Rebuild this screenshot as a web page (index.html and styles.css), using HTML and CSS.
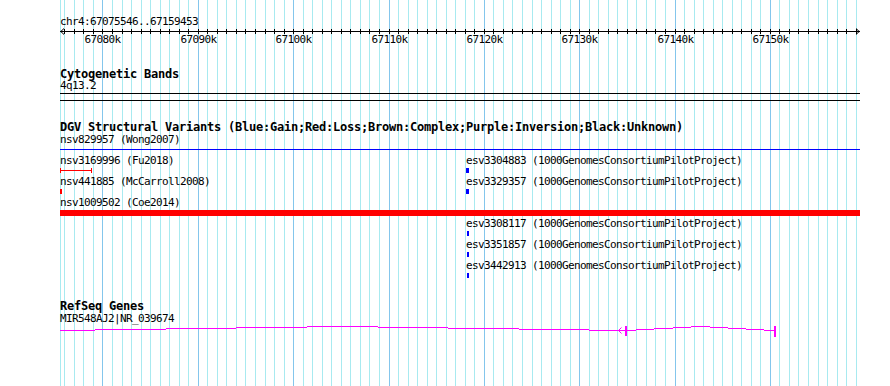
FILE: index.html
```html
<!DOCTYPE html>
<html>
<head>
<meta charset="utf-8">
<link rel="stylesheet" href="styles.css">
</head>
<body>
<div class="panel">
  <svg class="grid" width="890" height="386" viewBox="0 0 890 386">
    <path class="minor" d="M60.5 0V386M64.5 0V386M74.5 0V386M83.5 0V386M93.5 0V386M112.5 0V386M122.5 0V386M131.5 0V386M141.5 0V386M150.5 0V386M160.5 0V386M169.5 0V386M179.5 0V386M188.5 0V386M207.5 0V386M217.5 0V386M226.5 0V386M236.5 0V386M245.5 0V386M255.5 0V386M265.5 0V386M274.5 0V386M284.5 0V386M303.5 0V386M312.5 0V386M322.5 0V386M331.5 0V386M341.5 0V386M350.5 0V386M360.5 0V386M369.5 0V386M379.5 0V386M398.5 0V386M408.5 0V386M417.5 0V386M427.5 0V386M436.5 0V386M446.5 0V386M455.5 0V386M465.5 0V386M474.5 0V386M493.5 0V386M503.5 0V386M512.5 0V386M522.5 0V386M532.5 0V386M541.5 0V386M551.5 0V386M560.5 0V386M570.5 0V386M589.5 0V386M598.5 0V386M608.5 0V386M617.5 0V386M627.5 0V386M636.5 0V386M646.5 0V386M655.5 0V386M665.5 0V386M684.5 0V386M694.5 0V386M703.5 0V386M713.5 0V386M722.5 0V386M732.5 0V386M741.5 0V386M751.5 0V386M760.5 0V386M779.5 0V386M789.5 0V386M798.5 0V386M808.5 0V386M818.5 0V386M827.5 0V386M837.5 0V386M846.5 0V386M856.5 0V386"/>
    <path class="major" d="M102.5 0V386M198.5 0V386M293.5 0V386M389.5 0V386M484.5 0V386M579.5 0V386M675.5 0V386M770.5 0V386"/>
  </svg>

  <div class="tracks">
    <div class="lbl chrom">chr4:67075546..67159453</div>
    <svg class="ruler" width="802" height="19" viewBox="0 0 802 19">
      <path class="axis" d="M0 3.5H800"/>
      <path class="axis" d="M4 0.5L0.8 3.5L4 6.5M796 0.5L799.2 3.5L796 6.5"/>
      <path class="ticks" d="M4.5 1V6M14.5 1V6M23.5 1V6M33.5 1V6M42.5 1V6M52.5 1V6M62.5 1V6M71.5 1V6M81.5 1V6M90.5 1V6M100.5 1V6M109.5 1V6M119.5 1V6M128.5 1V6M138.5 1V6M147.5 1V6M157.5 1V6M166.5 1V6M176.5 1V6M185.5 1V6M195.5 1V6M205.5 1V6M214.5 1V6M224.5 1V6M233.5 1V6M243.5 1V6M252.5 1V6M262.5 1V6M271.5 1V6M281.5 1V6M290.5 1V6M300.5 1V6M309.5 1V6M319.5 1V6M329.5 1V6M338.5 1V6M348.5 1V6M357.5 1V6M367.5 1V6M376.5 1V6M386.5 1V6M395.5 1V6M405.5 1V6M414.5 1V6M424.5 1V6M433.5 1V6M443.5 1V6M452.5 1V6M462.5 1V6M472.5 1V6M481.5 1V6M491.5 1V6M500.5 1V6M510.5 1V6M519.5 1V6M529.5 1V6M538.5 1V6M548.5 1V6M557.5 1V6M567.5 1V6M576.5 1V6M586.5 1V6M595.5 1V6M605.5 1V6M615.5 1V6M624.5 1V6M634.5 1V6M643.5 1V6M653.5 1V6M662.5 1V6M672.5 1V6M681.5 1V6M691.5 1V6M700.5 1V6M710.5 1V6M719.5 1V6M729.5 1V6M738.5 1V6M748.5 1V6M758.5 1V6M767.5 1V6M777.5 1V6M786.5 1V6M796.5 1V6"/>
      <text class="tick-label" x="42.5" y="15">67080k</text>
      <text class="tick-label" x="138.5" y="15">67090k</text>
      <text class="tick-label" x="233.5" y="15">67100k</text>
      <text class="tick-label" x="329.5" y="15">67110k</text>
      <text class="tick-label" x="424.5" y="15">67120k</text>
      <text class="tick-label" x="519.5" y="15">67130k</text>
      <text class="tick-label" x="615.5" y="15">67140k</text>
      <text class="tick-label" x="710.5" y="15">67150k</text>
    </svg>

    <div class="track cyto">
      <div class="title">Cytogenetic Bands</div>
      <div class="lbl">4q13.2</div>
      <div class="band"></div>
    </div>

    <div class="track dgv">
      <div class="title">DGV Structural Variants (Blue:Gain;Red:Loss;Brown:Complex;Purple:Inversion;Black:Unknown)</div>
      <div class="lbl sub">nsv829957 (Wong2007)</div>
      <div class="span-line"></div>
      <div class="rows">
        <div class="row">
          <span class="flabel" style="left:0px">nsv3169996 (Fu2018)</span>
          <span class="feat loss-range" style="left:0px;width:32px"></span>
          <span class="flabel" style="left:406px">esv3304883 (1000GenomesConsortiumPilotProject)</span>
          <span class="feat gain" style="left:406px;width:3px"></span>
        </div>
        <div class="row">
          <span class="flabel" style="left:0px">nsv441885 (McCarroll2008)</span>
          <span class="feat loss" style="left:0px;width:2px"></span>
          <span class="flabel" style="left:406px">esv3329357 (1000GenomesConsortiumPilotProject)</span>
          <span class="feat gain" style="left:406px;width:3px"></span>
        </div>
        <div class="row">
          <span class="flabel" style="left:0px">nsv1009502 (Coe2014)</span>
          <span class="feat loss thick" style="left:0px;width:800px"></span>
        </div>
        <div class="row">
          <span class="flabel" style="left:406px">esv3308117 (1000GenomesConsortiumPilotProject)</span>
          <span class="feat gain" style="left:407px;width:2px"></span>
        </div>
        <div class="row">
          <span class="flabel" style="left:406px">esv3351857 (1000GenomesConsortiumPilotProject)</span>
          <span class="feat gain" style="left:407px;width:2px"></span>
        </div>
        <div class="row">
          <span class="flabel" style="left:406px">esv3442913 (1000GenomesConsortiumPilotProject)</span>
          <span class="feat gain" style="left:407px;width:2px"></span>
        </div>
      </div>
    </div>

    <div class="track refseq">
      <div class="title">RefSeq Genes</div>
      <div class="lbl sub">MIR548AJ2|NR_039674</div>
      <svg class="gene" width="800" height="12" viewBox="0 0 800 12">
        <path class="intron" d="M0 5.5H35M35 4.5H106M106 3.5H176M176 2.5H247M247 1.5H318M318 2.5H388M388 3.5H459M459 4.5H529M529 5.5H565"/>
        <path class="strand" d="M561.5 2.5L558.5 5.5L561.5 8.5"/>
        <rect class="exon" x="565" y="1" width="2" height="10"/>
        <path class="intron" d="M566 5.5H576M576 4.5H594M594 3.5H613M613 2.5H631M631 1.5H650M650 2.5H668M668 3.5H686M686 4.5H704M704 5.5H714"/>
        <rect class="exon" x="714" y="1" width="2" height="11"/>
      </svg>
    </div>
  </div>
</div>
</body>
</html>
```

FILE: styles.css
```css
html, body {
  margin: 0;
  padding: 0;
  background: #ffffff;
}

.panel {
  position: relative;
  width: 890px;
  height: 386px;
  overflow: hidden;
  font-family: "DejaVu Sans Mono", "Liberation Mono", monospace;
  color: #000000;
}

.grid {
  position: absolute;
  left: 0;
  top: 0;
  z-index: 0;
}

.grid path {
  fill: none;
  stroke-width: 1;
  shape-rendering: crispEdges;
}

.grid .minor {
  stroke: #a8eaf0;
}

.grid .major {
  stroke: #84c6ec;
}

.tracks {
  position: relative;
  z-index: 1;
  margin-left: 60px;
  width: 800px;
}

.lbl, .flabel {
  font-size: 11px;
  line-height: 12px;
  height: 12px;
  letter-spacing: -0.623px;
  white-space: nowrap;
}

.chrom {
  padding-top: 16px;
}

.ruler {
  display: block;
  overflow: visible;
}

.ruler .axis {
  fill: none;
  stroke: #000000;
  stroke-width: 1;
}

.ruler path.axis:first-child {
  shape-rendering: crispEdges;
}

.ruler .ticks {
  fill: none;
  stroke: #000000;
  stroke-width: 1;
  shape-rendering: crispEdges;
}

.tick-label {
  font-family: "DejaVu Sans Mono", "Liberation Mono", monospace;
  font-size: 11px;
  letter-spacing: -0.623px;
  text-anchor: middle;
  fill: #000000;
}

.title {
  font-size: 12px;
  font-weight: bold;
  line-height: 11px;
  height: 11px;
  letter-spacing: -0.225px;
  white-space: nowrap;
}

.cyto {
  margin-top: 22px;
}

.band {
  margin-top: 1px;
  height: 6px;
  border-top: 1px solid #000000;
  border-bottom: 1px solid #000000;
}

.dgv {
  margin-top: 21px;
}

.sub {
  margin-top: 1px;
}

.span-line {
  margin-top: 3px;
  height: 1px;
  background: #0000ff;
}

.rows {
  margin-top: 5px;
}

.row {
  position: relative;
  height: 21px;
}

.flabel {
  position: absolute;
  top: 0;
}

.feat {
  position: absolute;
  top: 13px;
  height: 5px;
  box-sizing: border-box;
}

.gain {
  background: #0000ff;
}

.loss {
  background: #ff0000;
}

.loss.thick {
  height: 6px;
}

.loss-range {
  border-left: 1px solid #ff0000;
  border-right: 1px solid #ff0000;
}

.loss-range::before {
  content: "";
  position: absolute;
  left: 0;
  right: 0;
  top: 2px;
  height: 1px;
  background: #ff0000;
}

.refseq {
  margin-top: 20px;
}

.gene {
  display: block;
  overflow: visible;
}

.gene .intron {
  fill: none;
  stroke: #ff00ff;
  stroke-width: 1;
  shape-rendering: crispEdges;
}

.gene .strand {
  fill: none;
  stroke: #ff00ff;
  stroke-width: 1;
}

.gene .exon {
  fill: #ff00ff;
}
```
